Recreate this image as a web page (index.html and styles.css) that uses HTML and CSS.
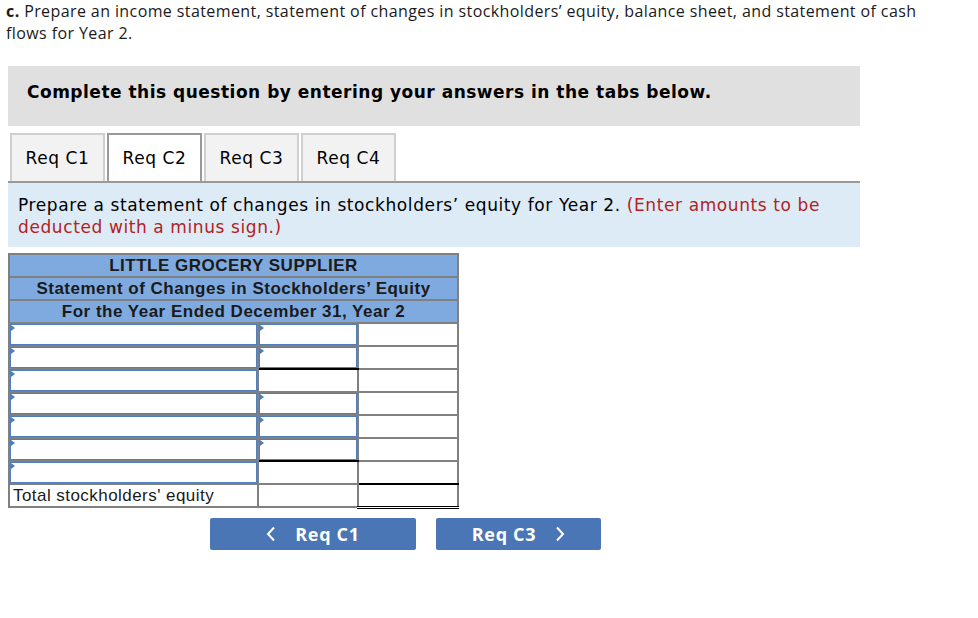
FILE: index.html
```html
<!DOCTYPE html>
<html>
<head>
<meta charset="utf-8">
<link rel="stylesheet" href="styles.css">
</head>
<body>
<div class="page">
  <p class="intro"><b>c.</b> Prepare an income statement, statement of changes in stockholders’ equity, balance sheet, and statement of cash flows for Year 2.</p>

  <div class="complete">Complete this question by entering your answers in the tabs below.</div>

  <div class="tabs">
    <div class="tab">Req C1</div>
    <div class="tab active">Req C2</div>
    <div class="tab">Req C3</div>
    <div class="tab">Req C4</div>
  </div>
  <div class="instr">Prepare a statement of changes in stockholders’ equity for Year 2. <span class="red">(Enter amounts to be deducted with a minus sign.)</span></div>

  <table class="stmt">
    <colgroup><col class="c1"><col class="c2"><col class="c3"></colgroup>
    <tr class="hd"><td colspan="3">LITTLE GROCERY SUPPLIER</td></tr>
    <tr class="hd"><td colspan="3">Statement of Changes in Stockholders’ Equity</td></tr>
    <tr class="hd"><td colspan="3">For the Year Ended December 31, Year 2</td></tr>
    <tr><td><div class="inp"></div></td><td><div class="inp"></div></td><td></td></tr>
    <tr><td><div class="inp"></div></td><td class="ub"><div class="inp"></div></td><td></td></tr>
    <tr><td><div class="inp"></div></td><td></td><td></td></tr>
    <tr><td><div class="inp"></div></td><td><div class="inp"></div></td><td></td></tr>
    <tr><td><div class="inp"></div></td><td><div class="inp"></div></td><td></td></tr>
    <tr><td><div class="inp"></div></td><td class="ub"><div class="inp"></div></td><td></td></tr>
    <tr><td><div class="inp"></div></td><td></td><td class="ub"></td></tr>
    <tr><td class="lbl">Total stockholders' equity</td><td></td><td class="dbl"></td></tr>
  </table>

  <div class="nav">
    <button class="btn prev"><svg width="10" height="16" viewBox="0 0 10 16"><path d="M8 1.5 L2 8 L8 14.5" fill="none" stroke="#fff" stroke-width="2"/></svg><span>Req C1</span></button>
    <button class="btn next"><span>Req C3</span><svg width="10" height="16" viewBox="0 0 10 16"><path d="M2 1.5 L8 8 L2 14.5" fill="none" stroke="#fff" stroke-width="2"/></svg></button>
  </div>
</div>
</body>
</html>
```

FILE: styles.css
```css
html, body { margin: 0; padding: 0; background: #fff; }
.page { padding: 0 0 0 8px; }
.intro {
  margin: 0;
  margin-left: -2px;
  width: 925px;
  font-family: "Open Sans", "Liberation Sans", sans-serif;
  font-size: 16px;
  letter-spacing: 0.4px;
  line-height: 22px;
  color: #1a1a1a;
}
.intro b { font-weight: 700; }
.complete {
  margin-top: 22px;
  width: 852px;
  height: 60px;
  background: #e0e0e0;
  box-sizing: border-box;
  padding: 14px 0 0 19px;
  font-family: "DejaVu Sans", Verdana, sans-serif;
  font-weight: bold;
  font-size: 17px;
  letter-spacing: 0.5px;
  line-height: 24px;
  color: #000;
}
.tabs {
  display: flex;
  gap: 2px;
  margin-top: 7px;
  padding-left: 2px;
}
.tab {
  width: 91px;
  height: 46px;
  border: 2px solid #cfcfcf;
  border-bottom: none;
  background: #f2f2f2;
  font-family: "DejaVu Sans", Verdana, sans-serif;
  font-size: 17px;
  letter-spacing: 0.6px;
  line-height: 47px;
  text-align: center;
  color: #000;
}
.tab.active { background: #fff; border-color: #9a9a9a; }
.instr {
  width: 852px;
  border-top: 2px solid #999;
  background: #ddebf7;
  height: 66px;
  box-sizing: border-box;
  padding: 11px 10px 0 10px;
  font-family: "DejaVu Sans", Verdana, sans-serif;
  font-size: 17px;
  letter-spacing: 0.6px;
  line-height: 22px;
  color: #000;
}
.red { color: #b22222; }
.stmt {
  margin-top: 6px;
  border-collapse: collapse;
  width: 449px;
  table-layout: fixed;
  font-family: "Liberation Sans", Arial, sans-serif;
  font-size: 17px;
}
.c1 { width: 249px; }
.c2 { width: 100px; }
.c3 { width: 100px; }
.stmt td {
  border: 2px solid #808080;
  height: 21px;
  padding: 0;
  box-sizing: border-box;
}
.stmt tr { height: 23px; }
.hd td {
  background: #7faadf;
  text-align: center;
  font-weight: bold;
  letter-spacing: 0.5px;
  color: #1a1a1a;
  line-height: 19px;
}
.inp {
  position: relative;
  height: 19px;
  border: 1px solid #4f7fbf;
  background: #fff;
}
.inp::before {
  content: "";
  position: absolute;
  left: 0;
  top: 0;
  border-top: 3px solid transparent;
  border-bottom: 3px solid transparent;
  border-left: 4px solid #4a7ebb;
}
.stmt td.ub { border-bottom-color: #000; }
.stmt td.dbl { border-bottom: 3px double #000; }
.lbl { padding-left: 3px !important; line-height: 19px; letter-spacing: 0.45px; color: #1a1a1a; white-space: nowrap; }
.nav {
  display: flex;
  gap: 20px;
  margin: 9px 0 0 202px;
}
.btn {
  height: 32px;
  border: none;
  border-radius: 2px;
  background: #4a76b5;
  color: #fff;
  font-family: "Open Sans", "Liberation Sans", sans-serif;
  font-weight: 700;
  font-size: 18px;
  letter-spacing: 0.7px;
  display: flex;
  align-items: center;
  justify-content: center;
  padding: 0;
}
.prev { width: 206px; gap: 19px; }
.next { width: 165px; gap: 19px; }
```
